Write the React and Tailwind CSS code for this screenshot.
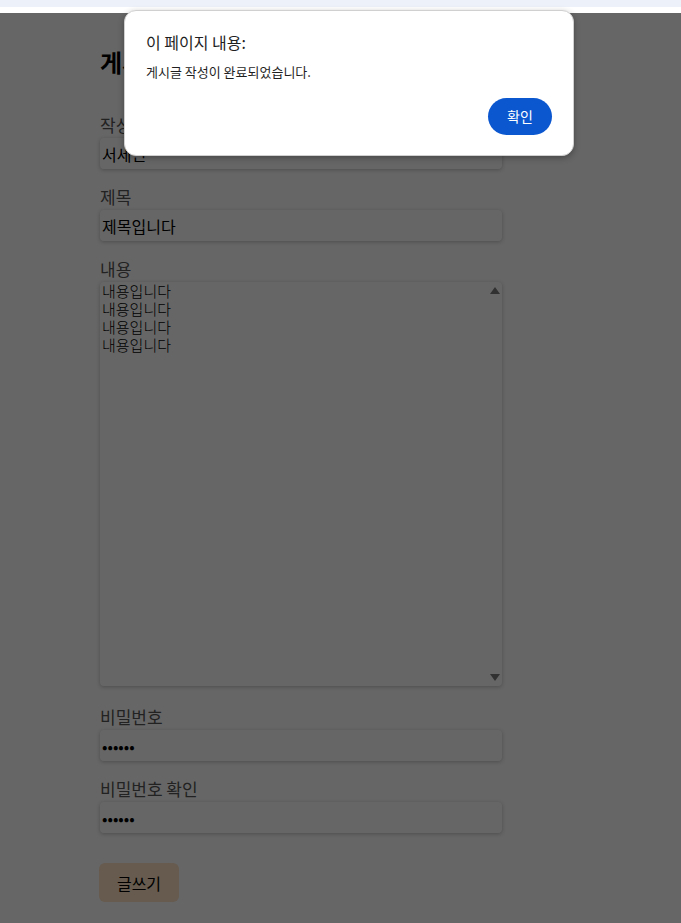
import { useState } from 'react';

const fontStack = { fontFamily: '"Noto Sans CJK KR", "Noto Sans", sans-serif' };

const Field = ({ label, children, className = '' }) => (
  <div className={className}>
    <label className="block text-[17px] leading-6 text-[#555555]">{label}</label>
    {children}
  </div>
);

const inputClass =
  'mt-px block h-[31px] w-[402px] rounded-[4px] bg-white px-[2px] text-[16px] text-black shadow-[0_1px_4px_rgba(0,0,0,0.25)] outline-none';

const App = () => {
  const [writer, setWriter] = useState('서세린');
  const [title, setTitle] = useState('제목입니다');
  const [content, setContent] = useState('내용입니다\n내용입니다\n내용입니다\n내용입니다');
  const [pw, setPw] = useState('123456');
  const [pwCheck, setPwCheck] = useState('123456');
  const [open, setOpen] = useState(true);

  return (
    <div className="relative min-h-[923px] bg-white" style={fontStack}>
      {/* 상단 바 */}
      <div className="h-[7px] bg-[#edf1fa]" />
      <div className="h-[6px] bg-white" />

      {/* 글쓰기 폼 */}
      <div className="relative h-[910px] overflow-hidden">
        <div className="pl-[100px] pt-[33px]">
          <h1 className="text-[24px] font-bold leading-8 text-black">게시글 작성</h1>

          <Field label="작성자" className="mt-[35px]">
            <input className={inputClass} value={writer} onChange={(e) => setWriter(e.target.value)} />
          </Field>

          <Field label="제목" className="mt-4">
            <input className={inputClass} value={title} onChange={(e) => setTitle(e.target.value)} />
          </Field>

          <Field label="내용" className="mt-4">
            <div className="relative mt-px w-[402px]">
              <textarea
                className="block h-[404px] w-[402px] resize-none overflow-y-scroll rounded-[4px] bg-white px-[2px] pt-0 text-[15px] font-light leading-[18px] text-black shadow-[0_1px_4px_rgba(0,0,0,0.25)] outline-none"
                value={content}
                onChange={(e) => setContent(e.target.value)}
              />
              {/* 스크롤바 화살표 */}
              <span className="pointer-events-none absolute right-[2px] top-[5px] h-0 w-0 border-x-[5px] border-b-[7px] border-x-transparent border-b-[#7a7a7a]" />
              <span className="pointer-events-none absolute bottom-[5px] right-[2px] h-0 w-0 border-x-[5px] border-t-[7px] border-x-transparent border-t-[#7a7a7a]" />
            </div>
          </Field>

          <Field label="비밀번호" className="mt-[19px]">
            <input type="password" className={inputClass} value={pw} onChange={(e) => setPw(e.target.value)} />
          </Field>

          <Field label="비밀번호 확인" className="mt-4">
            <input type="password" className={inputClass} value={pwCheck} onChange={(e) => setPwCheck(e.target.value)} />
          </Field>

          <button className="mt-[30px] ml-[-1px] h-[39px] w-[80px] rounded-[6px] bg-[#ffe4c4] text-[16px] text-black">
            글쓰기
          </button>
        </div>

        {/* 어두운 배경 */}
        {open && <div className="absolute inset-0 bg-black/60" />}
      </div>

      {/* 알림창 */}
      {open && (
        <div className="absolute left-[124px] top-[10px] w-[450px] rounded-xl border border-[#d0d0d0] bg-white px-[21px] pb-[20px] pt-[19px] shadow-[0_2px_6px_rgba(0,0,0,0.3)]">
          <p className="text-[16px] leading-6 text-[#1f1f1f]">이 페이지 내용:</p>
          <p className="mt-[9px] text-[13px] leading-[18px] text-[#1f1f1f]">게시글 작성이 완료되었습니다.</p>
          <div className="mt-[17px] flex justify-end">
            <button
              onClick={() => setOpen(false)}
              className="h-[37px] w-[64px] rounded-full bg-[#0b57d0] text-[14px] text-white"
            >
              확인
            </button>
          </div>
        </div>
      )}
    </div>
  );
};

export default App;
